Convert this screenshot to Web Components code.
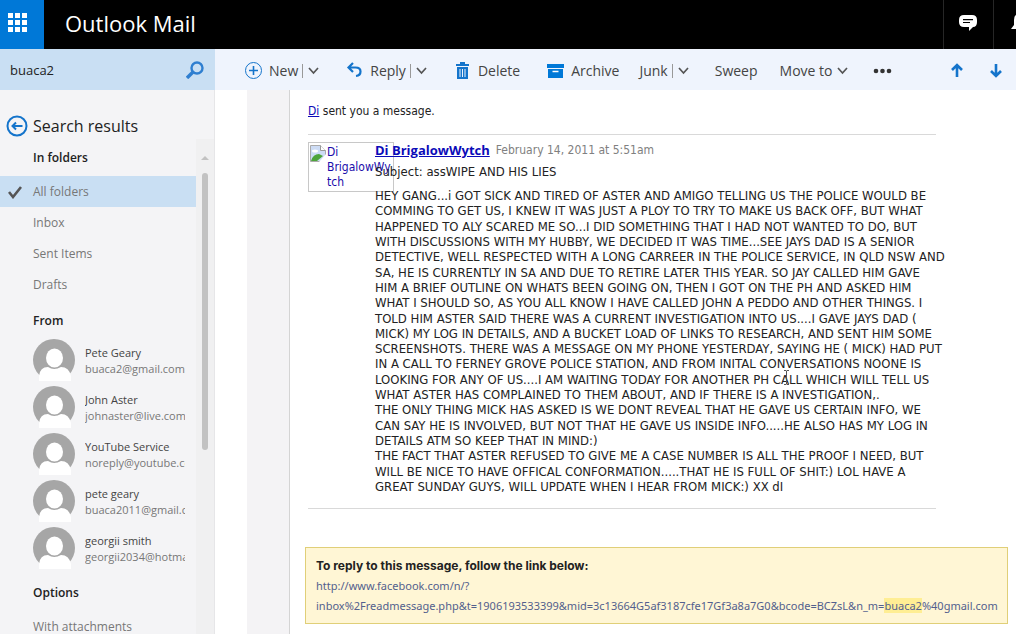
<!DOCTYPE html>
<html lang="en">
<head>
<meta charset="utf-8">
<title>Outlook Mail</title>
<style>
html,body{margin:0;height:100%}
body{font-family:"Open Sans","Noto Sans",sans-serif;font-size:12px;color:#222;overflow:hidden;background:#fff}
</style>
</head>
<body>
<mail-app></mail-app>
<script>
const define = (name, html) => {
  const t = document.createElement('template');
  t.innerHTML = `<style>*{box-sizing:border-box}button{font:inherit;color:inherit;background:none;border:0;padding:0;margin:0;cursor:pointer}svg{display:block;flex:none}</style>` + html;
  customElements.define(name, class extends HTMLElement {
    constructor() {
      super();
      this.attachShadow({mode: 'open'}).appendChild(t.content.cloneNode(true));
    }
  });
};

define('app-header', `
<style>
:host{display:flex;height:49px;background:#000;color:#fff;overflow:hidden}
.waffle{width:44px;background:#0078d7;display:grid;place-items:center;padding:0 10px 4px 0}
h1{margin:0;padding-left:21px;font-size:22px;font-weight:400;line-height:47px;flex:1}
.cell{width:50px;border-left:1px solid #262626;display:flex;align-items:center;justify-content:center;padding:0 2px 3px 0}
.last{width:23px;justify-content:flex-start;padding-left:17px;overflow:hidden}
</style>
<button class="waffle" aria-label="App launcher"><svg width="19" height="19" fill="#fff"><path d="M0 0h5v5H0zM7 0h5v5H7zM14 0h5v5h-5zM0 7h5v5H0zM7 7h5v5H7zM14 7h5v5h-5zM0 14h5v5H0zM7 14h5v5H7zM14 14h5v5h-5z"/></svg></button>
<h1>Outlook Mail</h1>
<button class="cell" aria-label="Messages"><svg width="18" height="18"><path d="M5 1h8q5 0 5 5v2q0 5-4 5l-4 4v-4H5q-5 0-5-5V6q0-5 5-5z" fill="#fff"/><path d="M4 5.700h10M4 8.500h7" stroke="#000" stroke-width="1.200"/></svg></button>
<button class="cell last" aria-label="Notifications"><svg width="16" height="18"><path d="M8 0q5 0 5 6v5l3 4H0l3-4V6q0-6 5-6zM5 16h6q-3 3-6 0z" fill="#fff"/></svg></button>`);

define('tool-item', `
<style>
:host{display:flex;align-items:center}
button{display:flex;align-items:center;font-size:14px;line-height:20px;color:#444;white-space:nowrap}
::slotted(svg){width:17px;height:18px;margin-right:7px;flex:none}
.bar{display:none;width:1px;height:14px;background:#999;margin-left:4px}
.chev{display:none;margin-left:5px}
:host([split]) .bar,:host([split]) .chev,:host([menu]) .chev{display:block}
:host([icon]){padding-left:7px}
:host([plain]){padding:0 2px 0 6px}
</style>
<button><slot></slot></button><span class="bar"></span>
<button class="chev" aria-label="More choices"><svg width="11" height="8"><path d="M1 1l4.500 5L10 1" fill="none" stroke="#555" stroke-width="1.700"/></svg></button>`);

define('command-bar', `
<style>
:host{display:flex;align-items:center;gap:20px;height:41px;background:#eff4fd;padding:2px 13px 0 23px}
.nav{margin-left:auto;display:flex;gap:25px}
</style>
<tool-item icon split><svg viewBox="0 0 17 18" fill="none" stroke="#1474cb"><circle cx="8.500" cy="8.500" r="8"/><path d="M4 8.500h9M8.500 4v9" stroke-width="1.600"/></svg>New</tool-item>
<tool-item icon split><svg viewBox="0 0 17 18" fill="none" stroke="#1474cb" stroke-width="2.200"><path d="M7 1L2.500 5.500 7 10M3 5.500h6.500q5 0 5 4t-4.500 4.500"/></svg>Reply</tool-item>
<tool-item icon><svg viewBox="0 0 17 18" fill="#1474cb"><path d="M6 0h5v2h4v2H2V2h4zM3 5h11v12H3z"/><path d="M6 7v8M8.500 7v8M11 7v8" stroke="#eff4fd"/></svg>Delete</tool-item>
<tool-item icon><svg viewBox="0 0 17 18" fill="#0078d7"><path d="M0 2h17v4H0zM1 7h15v9H1z"/><path d="M5.500 9.500h6" stroke="#fff" stroke-width="1.500"/></svg>Archive</tool-item>
<tool-item split>Junk</tool-item>
<tool-item plain>Sweep</tool-item>
<tool-item menu>Move to</tool-item>
<button aria-label="More commands"><svg width="25" height="6" fill="#333"><circle cx="8" cy="3" r="2.300"/><circle cx="14.500" cy="3" r="2.300"/><circle cx="21" cy="3" r="2.300"/></svg></button>
<div class="nav">
<button aria-label="Previous"><svg width="14" height="15" fill="none" stroke="#1474cb" stroke-width="2.600"><path d="M7 14V2M2 7l5-5 5 5"/></svg></button>
<button aria-label="Next"><svg width="14" height="15" fill="none" stroke="#1474cb" stroke-width="2.600"><path d="M7 1v12M2 8l5 5 5-5"/></svg></button>
</div>`);

define('search-box', `
<style>
:host{display:flex;align-items:center;height:41px;background:#c9dff3;padding:0 11px 0 10px}
input{flex:1;min-width:0;border:0;background:none;outline:0;padding:0;font:13px/20px "Open Sans",sans-serif;color:#222}
</style>
<input type="text" aria-label="Search mail" value="buaca2">
<button aria-label="Search"><svg width="18" height="18" fill="none" stroke="#2f7fd0"><circle cx="11" cy="7" r="5.500" stroke-width="2.400"/><path d="M7 11l-6 6" stroke-width="3.400"/></svg></button>`);

define('folder-item', `
<style>
:host{display:block}
button{display:flex;align-items:center;width:100%;height:31px;padding-left:8px;color:#777;line-height:16px}
svg{width:14px;margin-right:11px;visibility:hidden}
:host([selected]){background:#c9dff3}
:host([selected]) svg{visibility:visible}
</style>
<button><svg width="14" height="14"><path d="M1 7l4 5 8-10" fill="none" stroke="#555" stroke-width="2.600"/></svg><slot></slot></button>`);

define('person-item', `
<style>
:host{display:block}
button{display:flex;gap:10px;align-items:center;width:100%;height:47px;padding:0 11px 3px 33px;text-align:left;font-size:11px;line-height:16px}
.t{min-width:0;flex:1;overflow:hidden;white-space:nowrap;color:#444;padding-top:2px}
.m{display:block;color:#777}
</style>
<button><svg width="42" height="42"><circle cx="21" cy="21" r="21" fill="#a6a6a6"/><ellipse cx="21.500" cy="19" rx="8.500" ry="9.500" fill="#fff"/><path d="M6 42v-5q1-9 9-9 6 4 13 0 8 0 10 9v5z" fill="#fff"/></svg>
<span class="t"><slot></slot><span class="m"><slot name="mail"></slot></span></span></button>`);

define('side-panel', `
<style>
:host{display:grid;grid-template-columns:minmax(0,1fr) 18px;background:#f4f4f6;border-right:1px solid #e6e6e8;align-content:start;overflow:hidden}
header{grid-column:1/-1;display:flex;align-items:center;gap:5px;padding:23px 0 0 6px;height:49px}
h2{margin:0;font-size:16px;line-height:24px;font-weight:400;color:#222}
h3{margin:0;padding-left:33px;font-size:12px;font-weight:600;color:#222;line-height:20px}
.in{margin:9px 0 8px}.from{margin:11px 0 7px}.opt{margin:10px 0 8px}
.scroll{display:flex;flex-direction:column;align-items:center;background:#f0f0f1;padding-top:17px;gap:13px}
.thumb{width:6px;height:277px;border-radius:3px;background:#c2c2c2}
</style>
<header><button aria-label="Back"><svg width="22" height="22" fill="none" stroke="#1474cb" stroke-width="2"><circle cx="11" cy="11" r="9.500"/><path d="M16.500 11H6.500M10 7.500L6.500 11l3.500 3.500"/></svg></button><h2>Search results</h2></header>
<div>
<h3 class="in">In folders</h3>
<folder-item selected>All folders</folder-item><folder-item>Inbox</folder-item><folder-item>Sent Items</folder-item><folder-item>Drafts</folder-item>
<h3 class="from">From</h3>
<person-item>Pete Geary<span slot="mail">buaca2@gmail.com</span></person-item>
<person-item>John Aster<span slot="mail">johnaster@live.com</span></person-item>
<person-item>YouTube Service<span slot="mail">noreply@youtube.com</span></person-item>
<person-item>pete geary<span slot="mail">buaca2011@gmail.com</span></person-item>
<person-item>georgii smith<span slot="mail">georgii2034@hotmail.com</span></person-item>
<h3 class="opt">Options</h3>
<folder-item>With attachments</folder-item>
</div>
<div class="scroll" aria-hidden="true"><svg width="8" height="4"><path d="M0 4l4-4 4 4z" fill="#c2c2c2"/></svg><div class="thumb"></div></div>`);

define('missing-photo', `
<style>
:host{display:flex;width:86px;height:50px;border:1px solid #c8c8c8;padding:2px 1px 0;font-size:12px;line-height:15px;color:#1a0dab}
svg{margin-right:1px}
a{color:inherit;text-decoration:none;width:66px}
</style>
<svg width="16" height="17"><path d="M.5.5h10l5 5v11H.5z" fill="#cddcf5" stroke="#aaa"/><path d="M10.500.5v5h5" fill="#fff" stroke="#999"/><ellipse cx="5" cy="6" rx="3" ry="1.500" fill="#fff"/><path d="M1 16q2-7 8-7l4 2-6 5z" fill="#4ea53b"/><path d="M9 17l7-8v8z" fill="#fff"/></svg>
<a href="#profile">Di<br>BrigalowWy<br>tch</a>`);

define('message-post', `
<style>
:host{display:grid;grid-template-columns:67px 1fr;border:solid #d9d9d9;border-width:1px 0;padding:7px 0 14px}
.name{font:bold 13px/16px "Open Sans",sans-serif;color:#0b0bb8}
.head{display:flex;gap:6px;line-height:16px;white-space:nowrap}
time{color:#808080}
p{margin:6px 0 8px;font-size:13px;line-height:16px}
.text{display:flex;flex-direction:column;justify-content:space-between;min-height:306px;font-size:13px;line-height:15px;white-space:nowrap}
</style>
<missing-photo></missing-photo>
<div><div class="head"><a class="name" href="#profile">Di BrigalowWytch</a><time datetime="2011-02-14T05:51">February 14, 2011 at 5:51am</time></div>
<p>Subject: assWIPE AND HIS LIES</p>
<div class="text">
<span>HEY GANG...i GOT SICK AND TIRED OF ASTER AND AMIGO TELLING US THE POLICE WOULD BE</span>
<span>COMMING TO GET US, I KNEW IT WAS JUST A PLOY TO TRY TO MAKE US BACK OFF, BUT WHAT</span>
<span>HAPPENED TO ALY SCARED ME SO...I DID SOMETHING THAT I HAD NOT WANTED TO DO, BUT</span>
<span>WITH DISCUSSIONS WITH MY HUBBY, WE DECIDED IT WAS TIME...SEE JAYS DAD IS A SENIOR</span>
<span>DETECTIVE, WELL RESPECTED WITH A LONG CARREER IN THE POLICE SERVICE, IN QLD NSW AND</span>
<span>SA, HE IS CURRENTLY IN SA AND DUE TO RETIRE LATER THIS YEAR. SO JAY CALLED HIM GAVE</span>
<span>HIM A BRIEF OUTLINE ON WHATS BEEN GOING ON, THEN I GOT ON THE PH AND ASKED HIM</span>
<span>WHAT I SHOULD SO, AS YOU ALL KNOW I HAVE CALLED JOHN A PEDDO AND OTHER THINGS. I</span>
<span>TOLD HIM ASTER SAID THERE WAS A CURRENT INVESTIGATION INTO US....I GAVE JAYS DAD (</span>
<span>MICK) MY LOG IN DETAILS, AND A BUCKET LOAD OF LINKS TO RESEARCH, AND SENT HIM SOME</span>
<span>SCREENSHOTS. THERE WAS A MESSAGE ON MY PHONE YESTERDAY, SAYING HE ( MICK) HAD PUT</span>
<span>IN A CALL TO FERNEY GROVE POLICE STATION, AND FROM INITAL CONVERSATIONS NOONE IS</span>
<span>LOOKING FOR ANY OF US....I AM WAITING TODAY FOR ANOTHER PH CALL WHICH WILL TELL US</span>
<span>WHAT ASTER HAS COMPLAINED TO THEM ABOUT, AND IF THERE IS A INVESTIGATION,.</span>
<span>THE ONLY THING MICK HAS ASKED IS WE DONT REVEAL THAT HE GAVE US CERTAIN INFO, WE</span>
<span>CAN SAY HE IS INVOLVED, BUT NOT THAT HE GAVE US INSIDE INFO.....HE ALSO HAS MY LOG IN</span>
<span>DETAILS ATM SO KEEP THAT IN MIND:)</span>
<span>THE FACT THAT ASTER REFUSED TO GIVE ME A CASE NUMBER IS ALL THE PROOF I NEED, BUT</span>
<span>WILL BE NICE TO HAVE OFFICAL CONFORMATION.....THAT HE IS FULL OF SHIT:) LOL HAVE A</span>
<span>GREAT SUNDAY GUYS, WILL UPDATE WHEN I HEAR FROM MICK:) XX dI</span>
</div></div>`);

define('reply-notice', `
<style>
:host{display:block;background:#fff6d5;border:1px solid #e0cf78;padding:8px 10px 7px;line-height:20px}
h4{margin:0;font:bold 12px/20px Inter,sans-serif;color:#222}
a{display:block;font:11px/20px "Noto Sans",sans-serif;color:#535f8d;text-decoration:none;white-space:nowrap}
mark{background:#ffee94;color:inherit}
</style>
<h4>To reply to this message, follow the link below:</h4>
<a href="#reply">http://www.facebook.com/n/?<br>inbox%2Freadmessage.php&amp;t=1906193533399&amp;mid=3c13664G5af3187cfe17Gf3a8a7G0&amp;bcode=BCZsL&amp;n_m=<mark>buaca2</mark>%40gmail.com</a>`);

define('mail-reader', `
<style>
:host{display:grid;grid-template-columns:32px 42px minmax(0,1fr);position:relative;overflow:hidden;background:#fff}
.gutter{grid-column:2;background:#f4f3f5}
article{border-left:1px solid #d4d4d4;padding:13px 8px 0 15px;font-family:"DejaVu Sans Condensed","DejaVu Sans",sans-serif;font-size:12px;line-height:16px}
.mail{max-width:634px;padding:0 3px}
p{margin:0 0 15px}
p a{color:#0b0bb8}
reply-notice{margin-top:38px}
.caret{position:absolute;left:568px;top:280px}
</style>
<div class="gutter"></div>
<article><div class="mail"><p><a href="#di">Di</a> sent you a message.</p><message-post></message-post></div><reply-notice></reply-notice></article>
<svg class="caret" width="7" height="15" fill="none" stroke="#555"><path d="M1 .5h2l.5 1 .5-1h2M3.500 1v13M1 14.500h2l.5-1 .5 1h2"/></svg>`);

define('mail-app', `
<style>
:host{display:grid;grid-template:auto auto 1fr/215px minmax(0,1fr);height:100vh}
app-header{grid-column:1/-1}
</style>
<app-header></app-header><search-box></search-box><command-bar></command-bar><side-panel></side-panel><mail-reader></mail-reader>`);
</script>
</body>
</html>
